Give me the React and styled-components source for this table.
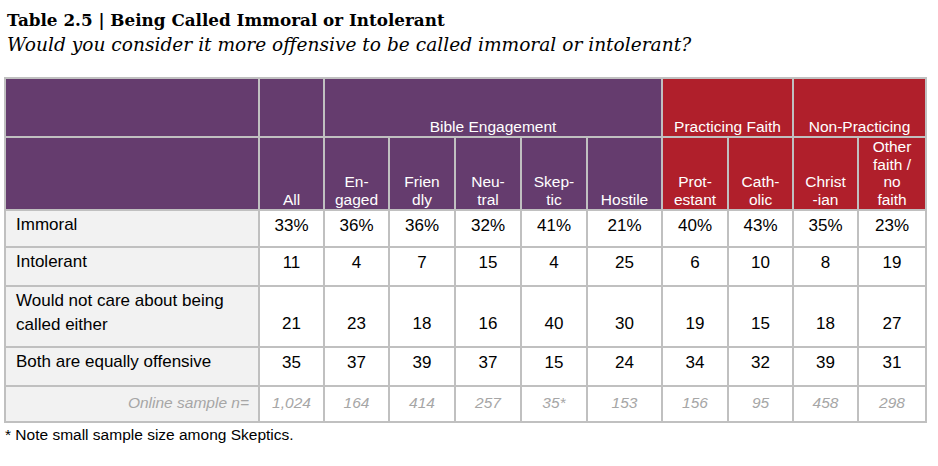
import React from "react";
import styled, { createGlobalStyle } from "styled-components";

const Global = createGlobalStyle`
  html, body { margin: 0; padding: 0; background: #ffffff; }
  body { font-family: "Liberation Sans", Arial, sans-serif; }
`;

const Page = styled.div`
  width: 938px;
  height: 466px;
  padding: 8px 0 0 4px;
  box-sizing: border-box;
  overflow: hidden;
`;

const Title = styled.h1`
  margin: 0 0 0 3px;
  font-family: "DejaVu Serif", "Liberation Serif", serif;
  font-weight: bold;
  font-size: 16.8px;
  line-height: 24px;
  color: #000;
`;

const Subtitle = styled.h2`
  margin: 0 0 0 3px;
  font-family: "DejaVu Serif", "Liberation Serif", serif;
  font-style: italic;
  font-weight: normal;
  font-size: 18.6px;
  line-height: 26px;
  color: #000;
`;

const Table = styled.table`
  margin-top: 19px;
  border-collapse: collapse;
  table-layout: fixed;
  width: 923px;
  border: 2px solid #c0c0c0;
  font-family: "Liberation Sans", Arial, sans-serif;
`;

const HeadCell = styled.th`
  background: ${(p) => (p.$red ? "#b01f2b" : "#653c6e")};
  color: #ffffff;
  font-weight: normal;
  font-size: 15.5px;
  line-height: 17.5px;
  text-align: center;
  vertical-align: bottom;
  border: 2px solid #c0c0c0;
  padding: 0 2px 1px;
  height: ${(p) => p.$h}px;
  box-sizing: border-box;
`;

const LabelCell = styled.td`
  background: #f2f2f2;
  font-size: 17px;
  line-height: 24px;
  color: #000;
  text-align: ${(p) => (p.$sample ? "right" : "left")};
  vertical-align: top;
  border: 2px solid #c0c0c0;
  padding: ${(p) => (p.$sample ? "4px 9px 0 10px" : "2px 10px 0 10px")};
  height: ${(p) => p.$h}px;
  box-sizing: border-box;
  ${(p) => p.$sample && "font-style: italic; font-size: 15.5px; color: #a6a6a6;"}
`;

const DataCell = styled.td`
  background: #ffffff;
  font-size: 17px;
  line-height: 24px;
  color: #000;
  text-align: center;
  vertical-align: bottom;
  border: 2px solid #c0c0c0;
  padding: 0 2px ${(p) => p.$pb}px;
  box-sizing: border-box;
  ${(p) => p.$sample && "font-style: italic; font-size: 15.5px; color: #a6a6a6;"}
`;

const Footnote = styled.p`
  margin: 3px 0 0 1px;
  font-size: 15.5px;
  line-height: 18px;
  color: #000;
`;

const cols = [254, 65, 65, 66, 66, 66, 75, 66, 65, 65, 68];

const subHeads = [
  { t: "All" },
  { t: "En-\ngaged" },
  { t: "Frien\ndly" },
  { t: "Neu-\ntral" },
  { t: "Skep-\ntic" },
  { t: "Hostile" },
  { t: "Prot-\nestant", red: true },
  { t: "Cath-\nolic", red: true },
  { t: "Christ\n-ian", red: true },
  { t: "Other\nfaith /\nno\nfaith", red: true },
];

const rows = [
  { label: "Immoral", h: 37, pb: 8, v: ["33%", "36%", "36%", "32%", "41%", "21%", "40%", "43%", "35%", "23%"] },
  { label: "Intolerant", h: 39, pb: 10, v: ["11", "4", "7", "15", "4", "25", "6", "10", "8", "19"] },
  { label: "Would not care about being\ncalled either", h: 61, pb: 10, v: ["21", "23", "18", "16", "40", "30", "19", "15", "18", "27"] },
  { label: "Both are equally offensive", h: 39, pb: 10, v: ["35", "37", "39", "37", "15", "24", "34", "32", "39", "31"] },
];

const sample = ["1,024", "164", "414", "257", "35*", "153", "156", "95", "458", "298"];

const Lines = ({ text }) =>
  text.split("\n").map((l, i, a) => (
    <React.Fragment key={i}>
      {l}
      {i < a.length - 1 && <br />}
    </React.Fragment>
  ));

export default function App() {
  return (
    <Page>
      <Global />
      <Title>Table 2.5 | Being Called Immoral or Intolerant</Title>
      <Subtitle>Would you consider it more offensive to be called immoral or intolerant?</Subtitle>
      <Table>
        <colgroup>
          {cols.map((w, i) => (
            <col key={i} style={{ width: w }} />
          ))}
        </colgroup>
        <thead>
          <tr>
            <HeadCell $h={59} />
            <HeadCell $h={59} />
            <HeadCell $h={59} colSpan={5}>Bible Engagement</HeadCell>
            <HeadCell $h={59} $red colSpan={2}>Practicing Faith</HeadCell>
            <HeadCell $h={59} $red colSpan={2}>Non-Practicing</HeadCell>
          </tr>
          <tr>
            <HeadCell $h={73} />
            {subHeads.map((s, i) => (
              <HeadCell key={i} $h={73} $red={s.red}>
                <Lines text={s.t} />
              </HeadCell>
            ))}
          </tr>
        </thead>
        <tbody>
          {rows.map((r) => (
            <tr key={r.label}>
              <LabelCell $h={r.h}>
                <Lines text={r.label} />
              </LabelCell>
              {r.v.map((v, i) => (
                <DataCell key={i} $pb={r.pb}>{v}</DataCell>
              ))}
            </tr>
          ))}
          <tr>
            <LabelCell $h={36} $sample>Online sample n=</LabelCell>
            {sample.map((v, i) => (
              <DataCell key={i} $sample $pb={6}>{v}</DataCell>
            ))}
          </tr>
        </tbody>
      </Table>
      <Footnote>* Note small sample size among Skeptics.</Footnote>
    </Page>
  );
}
